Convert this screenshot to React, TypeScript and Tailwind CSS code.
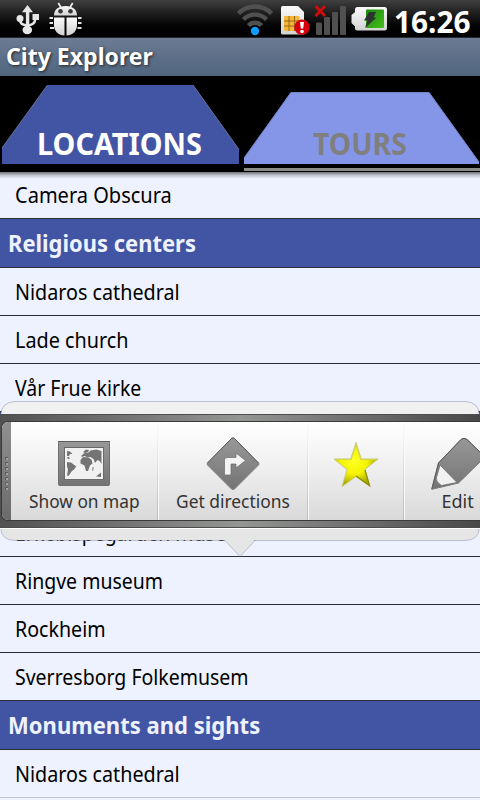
import { useLayoutEffect, useRef, useState } from "react";

/* Text set to an exact line width by condensing the glyphs horizontally. */
function Fit({ width, children }: { width: number; children: string }) {
  const ref = useRef<HTMLSpanElement>(null);
  const [scale, setScale] = useState(1);
  useLayoutEffect(() => {
    if (ref.current && ref.current.offsetWidth) {
      setScale(width / ref.current.offsetWidth);
    }
  }, [width]);
  return (
    <span className="block whitespace-nowrap" style={{ width }}>
      <span ref={ref} className="inline-block origin-left" style={{ transform: `scaleX(${scale})` }}>
        {children}
      </span>
    </span>
  );
}

function StatusBar() {
  return (
    <header className="relative flex h-[37px] shrink-0 bg-linear-to-b from-[#404040] to-black">
      <svg className="block h-[37px] w-[394px] shrink-0" viewBox="0 0 394 37">
        <defs>
          <linearGradient id="pale" x1="0" y1="0" x2="0" y2="1">
            <stop offset="0" stopColor="#fafafa" />
            <stop offset="1" stopColor="#d2d2d2" />
          </linearGradient>
          <linearGradient id="charge" x1="0" y1="0" x2="1" y2="1">
            <stop offset="0" stopColor="#1b8a0c" />
            <stop offset="1" stopColor="#43bd1c" />
          </linearGradient>
        </defs>
        {/* USB */}
        <g fill="#e6e6e6">
          <path d="M27.500 5l5.500 7.300h-3.700V24h-3.400V12.300H22z" />
          <path d="M20.300 20v1c0 3 2.500 4 7 4.200s7.800-2 7.800-5.700v-2" fill="none" stroke="#e6e6e6" strokeWidth="2.500" />
          <circle cx="20" cy="18.500" r="3.500" />
          <rect x="32.500" y="14" width="6.500" height="6" />
          <ellipse cx="27.300" cy="30" rx="4.800" ry="4.200" />
        </g>
        {/* debug bug */}
        <g fill="url(#pale)">
          <path d="M54 15.500C54 9.500 58.500 6 65.500 6S77 9.500 77 15.500z" />
          <path d="M54 17.500h10.500V35.500C57.500 35 54 30.500 54 25zM66.500 17.500H77V25c0 5.500-3.500 10-10.500 10.500z" />
        </g>
        <path d="M58.300 3l3 5M72.700 3l-3 5" stroke="#eee" strokeWidth="1.700" />
        <circle cx="60.500" cy="11.300" r="2.300" fill="#383838" />
        <circle cx="70.500" cy="11.300" r="2.300" fill="#383838" />
        <path d="M49.500 18h3.500M49.500 23h3.500M50 28h4M78 18h3.500M78 23h3.500M77.500 28h4" stroke="#e3e3e3" strokeWidth="1.800" />
        {/* wifi */}
        <g fill="none" stroke="#505050" strokeWidth="4.400">
          <path d="M238.500 13.500a23 23 0 0 1 33 0" />
          <path d="M243.500 19.500a16 16 0 0 1 23 0" />
          <path d="M248.500 25.500a9 9 0 0 1 13 0" />
        </g>
        <circle cx="255" cy="31" r="4.200" fill="#0c9bff" />
        {/* SIM warning */}
        <path d="M281 7.500Q281 6 282.500 6H298l6 6V33Q304 34.500 302.500 34.500H282.500Q281 34.500 281 33z" fill="url(#pale)" />
        <rect x="284" y="16" width="15.500" height="15" rx="1" fill="#f3b73c" />
        <path d="M284 21h5v-5M284 26h5v5M299.500 21h-5v-5M299.500 26h-5v5M289 21h5.500v5H289z" fill="none" stroke="#9d6713" strokeWidth="1" />
        <circle cx="302" cy="27.200" r="7.700" fill="#d8000e" />
        <path d="M300 22h4l-.8 6.500h-2.400z" fill="#fff" />
        <circle cx="302" cy="31.500" r="1.800" fill="#fff" />
        {/* signal */}
        <g fill="#505050">
          <rect x="316" y="22.500" width="6" height="12.500" rx="1" />
          <rect x="324" y="17" width="6" height="18" rx="1" />
          <rect x="332" y="12" width="6" height="23" rx="1" />
          <rect x="340" y="6" width="6" height="29" rx="1" />
        </g>
        <path d="M315.500 6l9.500 10M325 6l-9.500 10" stroke="#d20c0c" strokeWidth="2.800" />
        {/* battery */}
        <path d="M357.500 7H384.500Q387 7 387 9.500V28Q387 30.500 384.500 30.500H357.500Q355 30.500 355 28V26H354.500L351.500 23V15L354.500 12.500H355V9.500Q355 7 357.500 7z" fill="url(#pale)" />
        <rect x="366" y="9.500" width="18" height="18.500" rx="1" fill="url(#charge)" />
        <path d="M369 12h7l-2.500 5.500h3L365 28l2.500-7.500H364z" fill="#2d3430" />
      </svg>
      <div className="mt-[1px] text-[30px] leading-[41px] font-bold text-white">
        <Fit width={76.5}>16:26</Fit>
      </div>
    </header>
  );
}

function TabBar() {
  return (
    <nav className="relative h-[96px] shrink-0 bg-black">
      <svg className="absolute inset-0" width="480" height="96" viewBox="0 0 480 96">
        <path d="M2 88V72L47.500 9H193L239 73.500V88z" fill="#4255a4" />
        <path d="M2 72L47.500 9M193 9L239 73.500" stroke="#7782a8" strokeWidth=".8" />
        <path d="M244 88V82L291 16H429L479 86V88z" fill="#8596e9" />
        <path d="M244 82L291 16.500H429L479 86" fill="none" stroke="#7386c5" strokeWidth="1" />
        <rect x="244" y="92" width="236" height="3" fill="#8c8c8a" />
      </svg>
      <div className="relative flex pt-[47px] text-[30px] leading-[41px] font-bold">
        <div className="w-[312.5px] pl-[37px] text-white">
          <Fit width={164.5}>LOCATIONS</Fit>
        </div>
        <div className="text-[#7f7f7f]">
          <Fit width={93.5}>TOURS</Fit>
        </div>
      </div>
    </nav>
  );
}

type Entry = { text?: string; width?: number; header?: boolean };

/* Entries without text are the rows that lie wholly behind the action popup. */
const entries: Entry[] = [
  { text: "Camera Obscura", width: 156.5 },
  { text: "Religious centers", width: 188, header: true },
  { text: "Nidaros cathedral", width: 165 },
  { text: "Lade church", width: 113.5 },
  { text: "Vår Frue kirke", width: 126.5 },
  { header: true },
  {},
  { text: "Erkebispegården museum", width: 241 },
  { text: "Ringve museum", width: 148 },
  { text: "Rockheim", width: 91 },
  { text: "Sverresborg Folkemusem", width: 234 },
  { text: "Monuments and sights", width: 252, header: true },
  { text: "Nidaros cathedral", width: 165 },
];

function PlaceList() {
  return (
    <main className="relative flex h-[628px] flex-col justify-end overflow-hidden bg-[#eef2ff]">
      {entries.map((e, i) =>
        e.header ? (
          <h2 key={i} className="h-[49px] shrink-0 border-b border-[#2b2d35] bg-[#4255a4] pl-[8px] text-[23px] leading-[48px] font-bold text-[#eef2ff]">
            {e.text && <Fit width={e.width ?? 0}>{e.text}</Fit>}
          </h2>
        ) : (
          <div
            key={i}
            className={`h-[48px] shrink-0 border-b pl-[15px] text-[22px] leading-[47px] text-black ${i === entries.length - 1 ? "mb-[2px] border-[#bfc5d6]" : "border-[#2b2d35]"}`}
          >
            {e.text && <Fit width={e.width ?? 0}>{e.text}</Fit>}
          </div>
        )
      )}
      <div className="absolute inset-x-0 top-0 h-[7px] bg-linear-to-b from-[#70737b] via-[#c5c9d5] to-transparent" />
    </main>
  );
}

function MapIcon() {
  return (
    <svg width="52" height="45" viewBox="0 0 52 45">
      <defs>
        <linearGradient id="steel" x1="0" y1="0" x2="0" y2="1">
          <stop offset="0" stopColor="#989898" />
          <stop offset="1" stopColor="#747474" />
        </linearGradient>
      </defs>
      <rect x=".5" y=".5" width="51" height="44" rx="1" fill="url(#steel)" stroke="#707070" />
      <path d="M0 .5h52" stroke="#5c5c5c" />
      <rect x="6" y="6" width="40" height="33" fill="#6a6a6a" />
      <rect x="7" y="7" width="38" height="31" fill="#f1f1f1" />
      <g fill="#747474">
        <path d="M9 10l3 .5 2.500 2.500-2.500 0-1 2H9z" />
        <path d="M9 16h2l1 1.500-2 .5z" />
        <path d="M9 21l4 .5 5.300 4-2.300 3-2.500 2-3 4.500-1.500-.5 1-6-1-3z" />
        <path d="M25 11l3-2.500 3 .5-1 2-3 1z" />
        <path d="M23.500 14.500l3-2.500 4-.5 2-2 6-1 5 1.500V23l-1.500-2.500-2-1.500-1.500 1-1.500 2-1.500-4-3-2-3 .5-3-1.500-3 1z" />
        <path d="M22.500 19l2.500-3 5 .5 3.500 2 1 4-2.500 2-2 5.500h-2l-1.500-5.500-4-2z" />
        <path d="M34.500 26.500l1.200-.5-.5 3.500-1 .5zM38 35.500l5-4v4.500z" />
      </g>
    </svg>
  );
}

function DirectionsIcon() {
  return (
    <svg className="-mb-[2px]" width="54" height="54" viewBox="0 0 54 54">
      <path d="M25.500 1.500Q27 .3 28.500 1.500L52.500 26Q53.500 27 52.500 28L28.500 52Q27 53.200 25.500 52L1.500 28Q.5 27 1.500 26z" fill="url(#steel)" stroke="#808080" />
      <path d="M1.500 26L25.500 1.500Q27 .3 28.500 1.500L52.500 26" fill="none" stroke="#5c5c5c" />
      <path d="M18.500 37V23Q18.500 20.500 21 20.500H30V16L39.500 23.500 30 31V27H25V37Q25 38 24 38H19.500Q18.500 38 18.500 37z" fill="#f4f4f4" stroke="#6a6a6a" strokeWidth=".7" />
    </svg>
  );
}

function StarIcon() {
  return (
    <svg width="48" height="48" viewBox="0 0 48 48">
      <defs>
        <radialGradient id="gold" cx=".45" cy=".42" r=".55">
          <stop offset="0" stopColor="#ffff28" />
          <stop offset=".55" stopColor="#f4f400" />
          <stop offset="1" stopColor="#a6a600" />
        </radialGradient>
      </defs>
      <path d="M24 1.500L29.200 18H46L32.800 28.500 38 45.500 24 35.500 10 45.500 15.200 28.500 2 18H18.800z" fill="url(#gold)" stroke="#c9c972" strokeWidth="1" />
      <path d="M33 29l4.500 15.500L24 35" fill="none" stroke="#8c8c00" strokeWidth="1.200" />
      <path d="M3.500 18.500H19L24 4l5 14.500h15.500" fill="none" stroke="#d5d550" strokeWidth="1.200" />
    </svg>
  );
}

function PencilIcon() {
  return (
    <svg className="-mb-[2px] overflow-visible" width="54" height="54" viewBox="0 0 54 54">
      <path d="M7.500 26L30 2.500Q33 0 36 2.500L51 17Q54 20 51 23L27.500 46 .8 52.300z" fill="url(#steel)" stroke="#7a7a7a" />
      <path d="M.8 52L7.500 26 30 2.500Q33 0 36 2.500L51 17" fill="none" stroke="#5a5a5a" strokeWidth="1" />
      <path d="M9 28L26 45.500 10.500 48.500Q4.500 44.500 5.500 40.500z" fill="#f2f2f2" stroke="#6c6c6c" strokeWidth=".8" />
    </svg>
  );
}

/* Hairline between two actions, fading out towards the top. */
function Divider() {
  return (
    <div className="flex w-[2px] shrink-0">
      <span className="w-px bg-linear-to-b from-white to-[#b8b8b8]" />
      <span className="w-px bg-[#fafafa]" />
    </div>
  );
}

function Label({ width, children }: { width: number; children: string }) {
  return (
    <div className="mt-auto mb-[6px] h-[25px] text-[18px] leading-[25px] text-[#333333]">
      <Fit width={width}>{children}</Fit>
    </div>
  );
}

function QuickActions() {
  const cell = "flex shrink-0 flex-col items-center";
  return (
    <section className="absolute top-[401px] left-0 flex h-[156px] w-[480px] flex-col overflow-hidden">
      <svg className="absolute inset-0" width="480" height="156" viewBox="0 0 480 156">
        <defs>
          <linearGradient id="bubble" x1="0" y1="0" x2="0" y2="1">
            <stop offset="0" stopColor="#f1f1f1" />
            <stop offset="1" stopColor="#e4e4e4" />
          </linearGradient>
        </defs>
        <path d="M15 1H465Q479 1 479 15V125Q479 139 465 139H255L240 155 225 139H15Q1 139 1 125V15Q1 1 15 1z" fill="url(#bubble)" />
        <path d="M15 .5H465Q479.500 1 479.500 15V126Q479 139.500 465 139.500H255L240 155.500 225 139.500H15Q1 139.500.5 126V15Q1 1 15 .5z" fill="none" stroke="#7c8298" strokeOpacity=".45" />
      </svg>
      <div className="relative mt-[13px] flex h-[114px] flex-col border-y border-[#4d4d4d] bg-linear-to-r from-[#515151] via-[#949694] to-[#484848] pt-[6px] pl-[1px] shadow-[0_1px_0_#ffffff]">
        <div className="flex h-[100px] overflow-hidden rounded-l-[7px] border-y border-l border-[#3a3a3a] bg-linear-to-b from-white via-[#eeeeee] to-[#d9d9d9]">
          <div className="flex w-[9px] shrink-0 flex-col items-center justify-center gap-[2px] bg-linear-to-b from-[#909090] to-[#6b6b6b] pt-1">
            {Array.from({ length: 7 }, (_, i) => (
              <span key={i} className="h-[3px] w-[3px] border-t border-l border-[#5c5c5c] bg-[#a2a2a2]" />
            ))}
          </div>
          <div className={`${cell} w-[146px]`}>
            <div className="flex h-[64px] items-end"><MapIcon /></div>
            <Label width={110.5}>Show on map</Label>
          </div>
          <Divider />
          <div className={`${cell} w-[148px] pr-px`}>
            <div className="flex h-[67px] items-end"><DirectionsIcon /></div>
            <Label width={114}>Get directions</Label>
          </div>
          <Divider />
          <div className={`${cell} w-[94px]`}>
            <div className="flex h-[67px] items-end"><StarIcon /></div>
          </div>
          <Divider />
          <div className={`${cell} w-[105px]`}>
            <div className="flex h-[67px] items-end"><PencilIcon /></div>
            <Label width={32}>Edit</Label>
          </div>
        </div>
      </div>
    </section>
  );
}

export default function App() {
  return (
    <div className="relative flex h-[800px] w-[480px] flex-col overflow-hidden bg-black font-['Noto_Sans','Open_Sans',sans-serif]">
      <StatusBar />
      <div className="h-[39px] shrink-0 border-t border-[#262833] bg-linear-to-b from-[#6d7b94] to-[#4f657e] pl-[6px] text-[24px] leading-[36px] font-bold text-white [text-shadow:1px_1px_3px_#222]">
        <Fit width={147}>City Explorer</Fit>
      </div>
      <TabBar />
      <PlaceList />
      <QuickActions />
    </div>
  );
}
